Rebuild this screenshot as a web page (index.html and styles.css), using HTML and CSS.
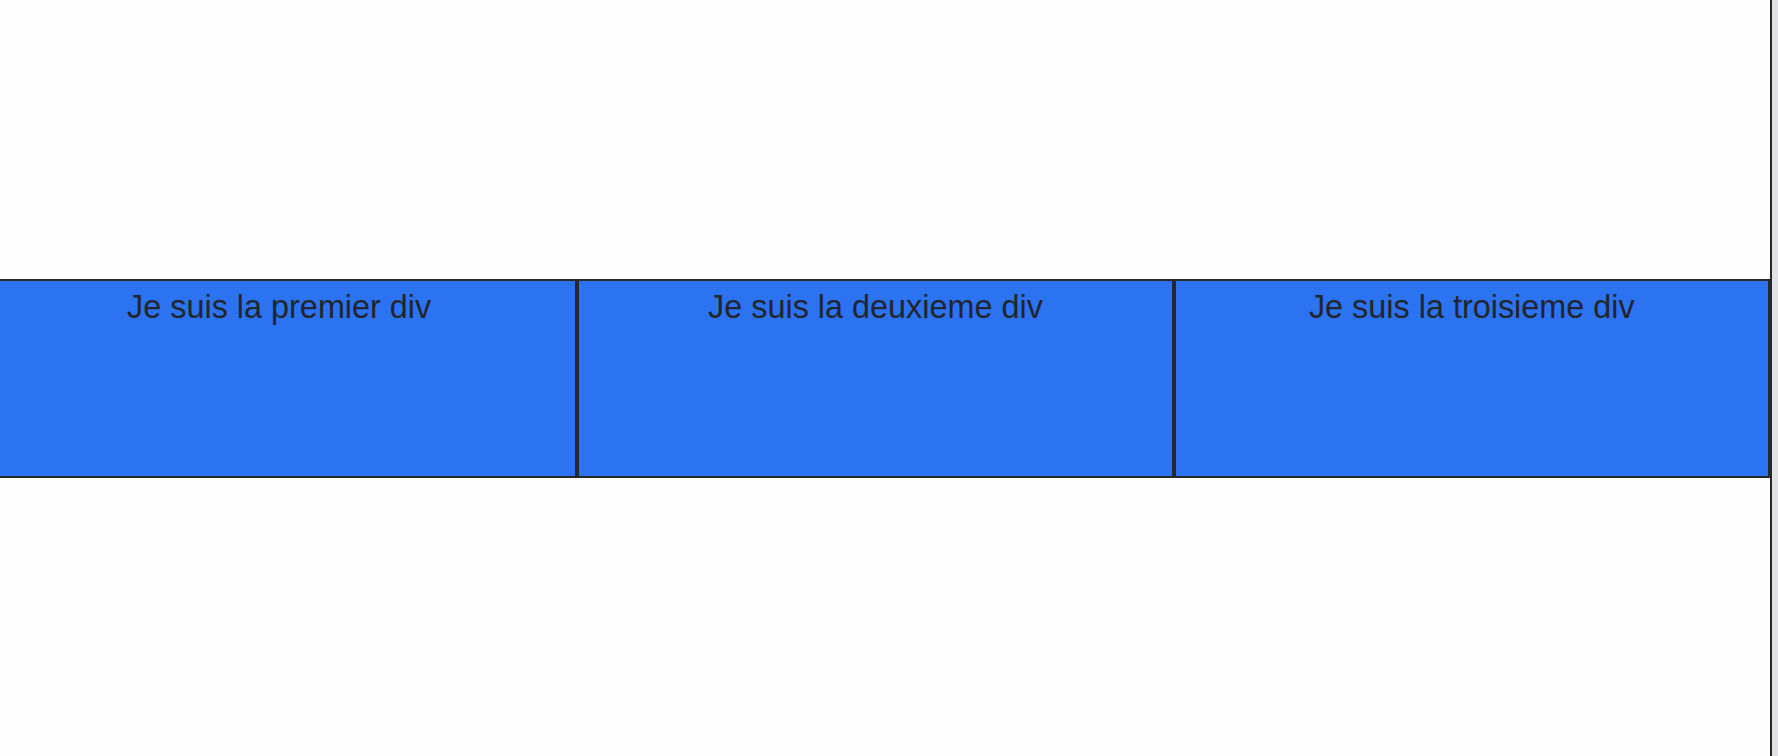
FILE: index.html
```html
<!DOCTYPE html>
<html lang="fr">

<head>
    <meta charset="UTF-8">
    <meta name="viewport" content="width=device-width, initial-scale=1.0">
    <title>Flexbox</title>
    <link rel="stylesheet" href="styles.css">
</head>

<body>
    <div class="page">
        <div class="stage">
            <div class="container">
                <div class="box">Je suis la premier div</div>
                <div class="box">Je suis la deuxieme div</div>
                <div class="box">Je suis la troisieme div</div>
            </div>
        </div>
        <div class="edge"></div>
        <div class="gutter"></div>
    </div>
</body>

</html>
```

FILE: styles.css
```css
* {
    margin: 0;
    padding: 0;
    box-sizing: border-box;
}

body {
    font-family: "Liberation Sans", Arial, sans-serif;
    background-color: #fefefe;
    height: 100vh;
    overflow: hidden;
}

.page {
    display: flex;
    height: 100vh;
}

.stage {
    flex: 1;
    display: flex;
    align-items: center;
    overflow: hidden;
}

.container {
    display: flex;
    flex: none;
    width: 1789px;
    height: 199px;
    margin-left: -19px;
}

.box {
    flex: 1;
    background-color: #2c73f2;
    border: 2px solid #27282c;
    color: #22252b;
    font-size: 32.4px;
    text-align: center;
    padding-top: 8px;
}

.edge {
    width: 2px;
    background-color: #27282c;
}

.gutter {
    width: 6px;
    background-color: #e1e1e6;
}
```
